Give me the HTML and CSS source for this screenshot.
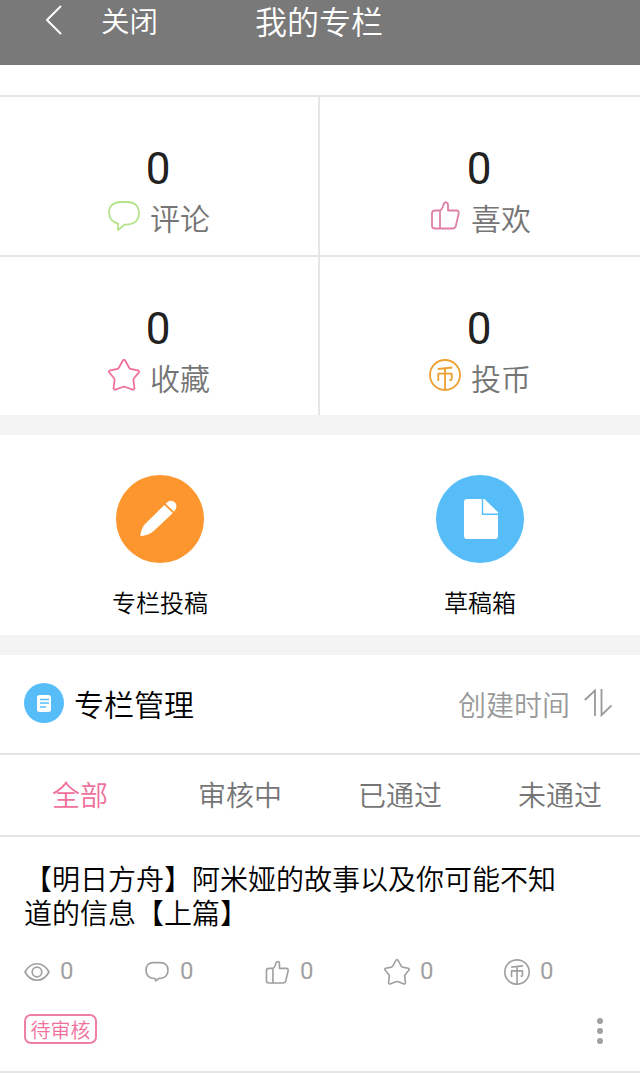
FILE: index.html
```html
<!DOCTYPE html>
<html lang="zh-CN">
<head>
<meta charset="utf-8">
<title>我的专栏</title>
<link rel="stylesheet" href="styles.css">
</head>
<body>
<svg class="sprite" width="0" height="0" aria-hidden="true">
  <symbol id="comment" viewBox="0 0 32 32">
    <path d="M16 3H13C5.500 3 1 7 1 13.300C1 19 4.500 23.300 10 24.600V31L16.500 25.700C19.500 25.400 31 26 31 14C31 7 26.500 3 19.500 3Z"/>
  </symbol>
  <symbol id="comment-small" viewBox="0 0 26 26">
    <path d="M9 3.700H16.500C21 3.700 24 6.500 24 11.300C24 16.500 20.500 19.500 14.800 19.500L11.800 21.800L11 19.500C5 19.500 2 16.500 2 11.300C2 6.500 5 3.700 9 3.700Z"/>
  </symbol>
  <symbol id="like" viewBox="0 -1 32 32">
    <path d="M11 28.500V10.500H6C4 10.500 3 11.500 3 13.500V25.500C3 27.500 4 28.500 6 28.500H23.500C25.400 28.500 26.300 27.700 26.800 26L29.600 14C30.200 11.500 29.200 10.500 27.300 10.500H19V4.500C19 1.800 15.800 1.500 14.800 3.800L13.800 7C13.100 8.800 12.500 9.700 11 10.500"/>
  </symbol>
  <symbol id="star" viewBox="0 0 32 32">
    <path d="M14.700 1.700Q16 -.3 17.300 1.700L21 8.500Q21.600 9.700 22.900 10L29.800 11.400Q32 12 30.500 13.800L26 19.300Q25.300 20.300 25.400 21.500L26.400 28.700Q26.500 31.500 23.900 30.400L17.500 28Q16 27.500 14.500 28L8.100 30.400Q5.500 31.500 5.600 28.700L6.600 21.500Q6.700 20.300 6 19.300L1.500 13.800Q0 12 2.200 11.400L9.100 10Q10.400 9.700 11 8.500Z"/>
  </symbol>
  <symbol id="coin" viewBox="0 0 32 32">
    <circle cx="16" cy="16" r="15"/>
    <path d="M23.300 8.500L8.800 10M9.300 22V14.600H22.700V20Q22.700 21.300 20.500 21M16 9.500V31"/>
  </symbol>
  <symbol id="eye" viewBox="0 0 26 26">
    <path d="M1 13C7 2 19 2 25 13C19 24 7 24 1 13Z"/><circle cx="13" cy="13" r="4.800"/>
  </symbol>
</svg>

<header class="navbar">
  <svg class="back" viewBox="0 0 16 30"><path d="M15 1L1 15L15 29"/></svg>
  <span class="close">关闭</span>
  <h1 class="title">我的专栏</h1>
</header>

<section class="stats">
  <div class="stat"><b class="num">0</b><div class="label"><svg class="icon green"><use href="#comment"/></svg>评论</div></div>
  <div class="stat"><b class="num">0</b><div class="label"><svg class="icon pink"><use href="#like"/></svg>喜欢</div></div>
  <div class="stat"><b class="num">0</b><div class="label"><svg class="icon rose"><use href="#star"/></svg>收藏</div></div>
  <div class="stat"><b class="num">0</b><div class="label"><svg class="icon gold"><use href="#coin"/></svg>投币</div></div>
</section>

<section class="actions">
  <div class="action">
    <svg class="disc" viewBox="0 0 88 88">
      <circle cx="44" cy="44" r="44" fill="#fd962e"/>
      <path fill="#fff" d="M48.300 30L56.800 38L38 55.800Q33 60.500 24.300 61.300Q25 54 28.800 49.300ZM49.600 28.700L52.500 26.300Q56 24.500 59 27.500Q61.500 30.500 59.700 34L58 36.700Z"/>
    </svg>
    <span class="caption">专栏投稿</span>
  </div>
  <div class="action">
    <svg class="disc" viewBox="0 0 88 88">
      <circle cx="44" cy="44" r="44" fill="#56bdf9"/>
      <path fill="#fff" d="M45.800 24H31Q28 24 28 27V61Q28 64 31 64H59Q62 64 62 61V39.900H45.800ZM47.200 24H48.500L62 37.300V38.500H47.200Z"/>
    </svg>
    <span class="caption">草稿箱</span>
  </div>
</section>

<section class="manage">
  <div class="manage-head">
    <svg class="badge" viewBox="0 0 40 40">
      <circle cx="20" cy="20" r="20" fill="#56bdf9"/>
      <rect x="13" y="12" width="14" height="17" rx="2.500" fill="#fff"/>
      <path d="M16 16.500H25M16 20H25M16 24H22" stroke="#56bdf9" stroke-width="1.500"/>
    </svg>
    <h2 class="manage-title">专栏管理</h2>
    <span class="sort">创建时间</span>
    <svg class="sort-icon" viewBox="0 0 28 28"><path d="M.8 11L11 1.500V27M17.500 0V26.200L27.500 16.500"/></svg>
  </div>
  <nav class="tabs">
    <span class="tab active">全部</span>
    <span class="tab">审核中</span>
    <span class="tab">已通过</span>
    <span class="tab">未通过</span>
  </nav>
  <article class="post">
    <h3 class="post-title">【明日方舟】阿米娅的故事以及你可能不知道的信息【上篇】</h3>
    <div class="metrics">
      <span class="metric"><svg class="mini"><use href="#eye"/></svg>0</span>
      <span class="metric"><svg class="mini"><use href="#comment-small"/></svg>0</span>
      <span class="metric"><svg class="mini scaled"><use href="#like"/></svg>0</span>
      <span class="metric"><svg class="mini scaled"><use href="#star"/></svg>0</span>
      <span class="metric"><svg class="mini scaled"><use href="#coin"/></svg>0</span>
    </div>
    <div class="post-foot">
      <span class="status">待审核</span>
      <svg class="more" viewBox="0 0 6 26"><circle cx="3" cy="3" r="3"/><circle cx="3" cy="13" r="3"/><circle cx="3" cy="23" r="3"/></svg>
    </div>
  </article>
</section>
</body>
</html>
```
FILE: styles.css
```css
* { box-sizing: border-box; }
body {
  margin: 0;
  background: #fff;
  font-family: Roboto, "Noto Sans CJK SC DemiLight", "Noto Sans CJK SC", sans-serif;
  font-weight: 350;
  color: #000;
}
svg { display: block; flex: none; }
.sprite { position: absolute; }
h1, h2, h3 { margin: 0; font-weight: inherit; }

.navbar {
  display: flex;
  align-items: flex-start;
  height: 65px;
  padding-left: 46px;
  background: #797979;
  color: #fff;
}
.back { width: 16px; height: 30px; margin-top: 5px; fill: none; stroke: #fff; stroke-width: 2; }
.close { width: 57px; margin-left: 39px; font-size: 28.500px; line-height: 46px; }
.title { margin-left: 97px; font-size: 32px; line-height: 46px; }

.stats {
  display: grid;
  grid-template-columns: 318px 320px;
  grid-template-rows: 158px 158px;
  gap: 2px;
  margin-top: 30px;
  padding-top: 2px;
  background: #e5e5e5;
}
.stat { display: flex; flex-direction: column; align-items: center; padding-top: 47px; background: #fff; }
.num { font-size: 44px; line-height: 50px; font-weight: 400; color: #212121; margin-left: -2px; }
.label { display: flex; align-items: center; gap: 10px; font-size: 30px; line-height: 52px; color: #757575; }
.icon { width: 32px; height: 32px; margin-top: -10px; fill: none; stroke-width: 1.800; stroke-linejoin: round; }
.green { stroke: #b5e38d; }
.pink { stroke: #e07fa6; }
.rose { stroke: #f0719c; }
.gold { stroke: #eba02f; }

.actions {
  display: grid;
  grid-template-columns: 1fr 1fr;
  height: 240px;
  padding-top: 40px;
  border: solid #f3f3f3;
  border-width: 20px 0;
}
.action { display: flex; flex-direction: column; align-items: center; }
.disc { width: 88px; height: 88px; }
.caption { margin-top: 23px; font-size: 24px; line-height: 36px; }

.manage-head { display: flex; align-items: flex-start; height: 100px; padding: 28px 28px 0 24px; border-bottom: 2px solid #e5e5e5; }
.badge { width: 40px; height: 40px; }
.manage-title { margin-left: 10px; font-size: 30px; line-height: 46px; }
.sort { margin-left: auto; font-size: 28px; line-height: 48px; color: #999; }
.sort-icon { width: 28px; height: 28px; margin: 6px 0 0 14px; fill: none; stroke: #999; stroke-width: 1.800; }

.tabs { display: grid; grid-template-columns: repeat(4, 1fr); height: 82px; border-bottom: 2px solid #e5e5e5; }
.tab { text-align: center; font-size: 28px; line-height: 84px; color: #757575; }
.active { color: #f0719c; }

.post { height: 236px; padding: 27px 24px 0; border-bottom: 2px solid #e5e5e5; }
.post-title { width: 546px; font-size: 28px; line-height: 34px; }
.metrics { display: grid; grid-template-columns: repeat(5, 120px); margin-top: 21px; color: #a0a0a0; font-weight: 400; }
.metric { display: flex; align-items: center; gap: 10px; font-size: 24px; line-height: 36px; }
.mini { width: 26px; height: 26px; margin-top: 2px; fill: none; stroke: #a0a0a0; stroke-width: 1.700; stroke-linejoin: round; }
.scaled { stroke-width: 2; }
.post-foot { display: flex; justify-content: space-between; align-items: center; margin-top: 25px; padding-right: 13px; }
.status { width: 73px; height: 30px; border: 2px solid #f07fa5; border-radius: 7px; font-size: 20px; line-height: 31px; text-align: center; color: #f0719c; white-space: nowrap; }
.more { width: 6px; height: 26px; margin-top: 4px; fill: #a0a0a0; }
```
